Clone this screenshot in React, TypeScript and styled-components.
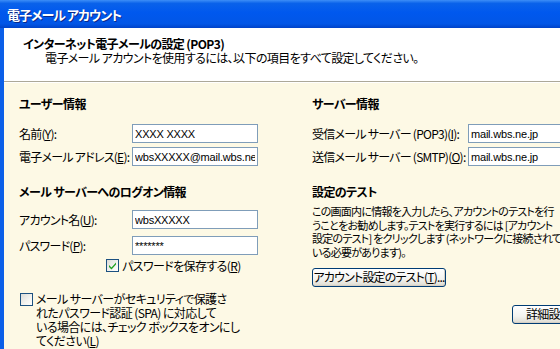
import React from "react";
import styled, { createGlobalStyle } from "styled-components";

const GlobalStyle = createGlobalStyle`
  html, body {
    margin: 0;
    padding: 0;
    overflow: hidden;
    background: #ffffff;
  }
  body {
    font-family: "Noto Sans CJK JP", "Liberation Sans", sans-serif;
    font-size: 12px;
    font-feature-settings: "palt";
    letter-spacing: -0.6px;
    color: #000000;
  }
`;

const Window = styled.div`
  width: 640px;
  height: 349px;
  display: flex;
  flex-direction: column;
  overflow: hidden;
`;

const TitleBar = styled.div`
  height: 28px;
  flex: none;
  display: flex;
  align-items: center;
  padding-left: 7px;
  background: linear-gradient(
    to bottom,
    #3d8ef7 0%,
    #0a62ea 12%,
    #0058ee 45%,
    #0256e6 85%,
    #0043c8 100%
  );
  color: #ffffff;
  font-size: 13px;
  font-weight: bold;
  text-shadow: 1px 1px 0 #0a2a8a;
  letter-spacing: -1px;
`;

const Frame = styled.div`
  flex: 1;
  display: flex;
  flex-direction: column;
  border-left: 4px solid #0b5fe8;
  box-shadow: inset 1px 0 0 #4a8ef5;
`;

const Header = styled.div`
  flex: none;
  height: 54px;
  box-sizing: border-box;
  background: #ffffff;
  border-bottom: 1px solid #aca899;
  padding: 9px 0 0 19px;
`;

const HeaderTitle = styled.div`
  font-weight: bold;
  line-height: 14px;
`;

const HeaderText = styled.div`
  line-height: 14px;
  padding-left: 22px;
`;

const Body = styled.div`
  flex: 1;
  display: grid;
  grid-template-columns: 293px 1fr;
  padding-left: 15px;
  background: #fdf9e5;
  border-top: 1px solid #ffffff;
`;

const Column = styled.div`
  display: flex;
  flex-direction: column;
`;

const SectionHeading = styled.div<{ $top: number }>`
  font-weight: bold;
  line-height: 14px;
  margin-top: ${(p) => p.$top}px;
`;

const Row = styled.div<{ $top: number }>`
  display: flex;
  align-items: center;
  height: 19px;
  margin-top: ${(p) => p.$top}px;
`;

const Label = styled.div<{ $width: number }>`
  width: ${(p) => p.$width}px;
  flex: none;
  white-space: nowrap;
  line-height: 14px;
  letter-spacing: -0.75px;
`;

const TextField = styled.input`
  width: 126px;
  height: 19px;
  box-sizing: border-box;
  flex: none;
  border: 1px solid #7f9db9;
  background: #ffffff;
  padding: 0 2px;
  margin: 0;
  font-family: "Liberation Sans", "Noto Sans CJK JP", sans-serif;
  font-size: 11px;
  letter-spacing: -0.2px;
  color: #000000;
  outline: none;
`;

const CheckRow = styled.div<{ $top: number; $left: number }>`
  display: flex;
  align-items: flex-start;
  gap: 3px;
  margin-top: ${(p) => p.$top}px;
  margin-left: ${(p) => p.$left}px;
`;

const Box = styled.span<{ $offset: number }>`
  width: 13px;
  height: 13px;
  flex: none;
  box-sizing: border-box;
  border: 1px solid #1c5180;
  background: linear-gradient(135deg, #dcdcd7 0%, #f4f4f0 60%, #ffffff 100%);
  display: flex;
  align-items: center;
  justify-content: center;
  margin-top: ${(p) => p.$offset}px;
`;

const CheckText = styled.div`
  line-height: 14px;
  white-space: nowrap;
`;

const Paragraph = styled.div`
  font-size: 11px;
  line-height: 13.7px;
  margin-top: 6px;
  white-space: nowrap;
  letter-spacing: -0.75px;
`;

const Button = styled.button<{ $top: number; $left: number; $width: number }>`
  width: ${(p) => p.$width}px;
  height: 19px;
  margin-top: ${(p) => p.$top}px;
  margin-left: ${(p) => p.$left}px;
  padding: 0;
  box-sizing: border-box;
  border: 1px solid #003c74;
  border-radius: 3px;
  background: linear-gradient(to bottom, #ffffff 0%, #f3f3ef 60%, #e3e1d8 90%, #d6d0c5 100%);
  box-shadow: inset -1px -1px 0 #d6d0c5;
  font-family: inherit;
  font-size: 12px;
  font-feature-settings: "palt";
  letter-spacing: -0.8px;
  line-height: 14px;
  color: #000000;
  white-space: nowrap;
  overflow: hidden;
  flex: none;
  align-self: flex-start;
`;

const Check = ({ checked, offset }: { checked?: boolean; offset: number }) => (
  <Box $offset={offset}>
    {checked && (
      <svg width="9" height="9" viewBox="0 0 9 9">
        <path d="M1 4 L3.5 6.5 L8 1.5 L8 3.5 L3.5 8.5 L1 6 Z" fill="#21a121" />
      </svg>
    )}
  </Box>
);

export default function App() {
  return (
    <>
      <GlobalStyle />
      <Window>
        <TitleBar>電子メール アカウント</TitleBar>
        <Frame>
          <Header>
            <HeaderTitle>インターネット電子メールの設定 (POP3)</HeaderTitle>
            <HeaderText>
              電子メール アカウントを使用するには、以下の項目をすべて設定してください。
            </HeaderText>
          </Header>
          <Body>
            <Column>
              <SectionHeading $top={14}>ユーザー情報</SectionHeading>
              <Row $top={13}>
                <Label $width={113}>
                  名前(<u>Y</u>):
                </Label>
                <TextField readOnly value="XXXX XXXX" />
              </Row>
              <Row $top={4}>
                <Label $width={113}>
                  電子メール アドレス(<u>E</u>):
                </Label>
                <TextField readOnly value="wbsXXXXX@mail.wbs.ne.jp" />
              </Row>
              <SectionHeading $top={19}>メール サーバーへのログオン情報</SectionHeading>
              <Row $top={11}>
                <Label $width={113}>
                  アカウント名(<u>U</u>):
                </Label>
                <TextField readOnly value="wbsXXXXX" />
              </Row>
              <Row $top={7}>
                <Label $width={113}>
                  パスワード(<u>P</u>):
                </Label>
                <TextField readOnly type="text" value="*******" />
              </Row>
              <CheckRow $top={4} $left={87}>
                <Check checked offset={0} />
                <CheckText>
                  パスワードを保存する(<u>R</u>)
                </CheckText>
              </CheckRow>
              <CheckRow $top={19} $left={1}>
                <Check offset={1} />
                <CheckText>
                  メール サーバーがセキュリティで保護さ
                  <br />
                  れたパスワード認証 (SPA) に対応して
                  <br />
                  いる場合には、チェック ボックスをオンにし
                  <br />
                  てください(<u>L</u>)
                </CheckText>
              </CheckRow>
            </Column>
            <Column>
              <SectionHeading $top={14}>サーバー情報</SectionHeading>
              <Row $top={13}>
                <Label $width={156}>
                  受信メール サーバー (POP3)(<u>I</u>):
                </Label>
                <TextField readOnly value="mail.wbs.ne.jp" />
              </Row>
              <Row $top={4}>
                <Label $width={156}>
                  送信メール サーバー (SMTP)(<u>O</u>):
                </Label>
                <TextField readOnly value="mail.wbs.ne.jp" />
              </Row>
              <SectionHeading $top={19}>設定のテスト</SectionHeading>
              <Paragraph>
                この画面内に情報を入力したら、アカウントのテストを行
                <br />
                うことをお勧めします。テストを実行するには [アカウント
                <br />
                設定のテスト] をクリックします (ネットワークに接続されて
                <br />
                いる必要があります)。
              </Paragraph>
              <Button $top={8} $left={0} $width={134}>
                アカウント設定のテスト(<u>T</u>)...
              </Button>
              <Button $top={18} $left={200} $width={96}>
                詳細設定(<u>M</u>)...
              </Button>
            </Column>
          </Body>
        </Frame>
      </Window>
    </>
  );
}
